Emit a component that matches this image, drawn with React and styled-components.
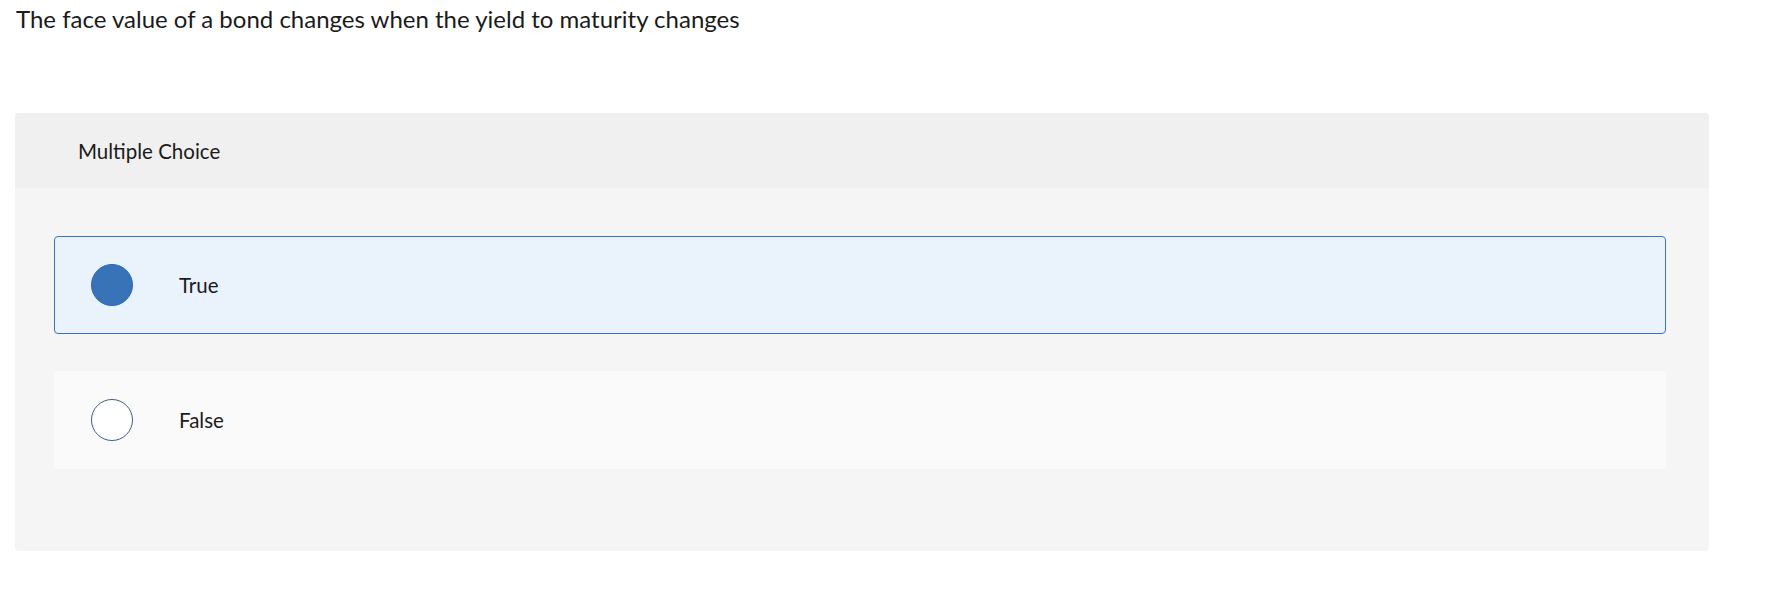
import styled, { createGlobalStyle } from "styled-components";

const GlobalStyle = createGlobalStyle`
  html, body {
    margin: 0;
    padding: 0;
    background: #ffffff;
  }
  body {
    font-family: Lato, "Noto Sans", "Liberation Sans", sans-serif;
    color: #1b1b1b;
  }
`;

const Page = styled.div`
  padding: 4px 68px 0 15px;
`;

const Question = styled.p`
  margin: 0 0 0 1px;
  font-size: 24px;
  line-height: 30px;
  color: #1b1b1b;
`;

const Panel = styled.section`
  margin-top: 79px;
  background: #f5f5f5;
  border-radius: 4px;
  overflow: hidden;
`;

const PanelHeader = styled.header`
  height: 75px;
  background: #f0f0f0;
  display: flex;
  align-items: center;
  padding-left: 63px;
  font-size: 20.5px;
`;

const Options = styled.div`
  display: flex;
  flex-direction: column;
  gap: 37px;
  padding: 48px 43px 82px 39px;
`;

const Option = styled.label`
  height: 98px;
  box-sizing: border-box;
  display: flex;
  align-items: center;
  gap: 46px;
  padding-left: ${(p) => (p.$selected ? 36 : 37)}px;
  border-radius: 4px;
  background: ${(p) => (p.$selected ? "#eaf2fb" : "#fafafa")};
  border: ${(p) => (p.$selected ? "1px solid #3a76be" : "none")};
  cursor: pointer;
`;

const Radio = styled.span`
  width: 42px;
  height: 42px;
  box-sizing: border-box;
  border-radius: 50%;
  flex: none;
  background: ${(p) => (p.$checked ? "#3973b7" : "#ffffff")};
  border: ${(p) => (p.$checked ? "1.5px solid #2468bf" : "1.5px solid #3f5f86")};
`;

const OptionText = styled.span`
  font-size: 20.5px;
  color: #1b1b1b;
`;

const choices = [
  { label: "True", selected: true },
  { label: "False", selected: false },
];

export default function App() {
  return (
    <>
      <GlobalStyle />
      <Page>
        <Question>The face value of a bond changes when the yield to maturity changes</Question>
        <Panel>
          <PanelHeader>Multiple Choice</PanelHeader>
          <Options>
            {choices.map((c) => (
              <Option key={c.label} $selected={c.selected}>
                <Radio $checked={c.selected} />
                <OptionText>{c.label}</OptionText>
              </Option>
            ))}
          </Options>
        </Panel>
      </Page>
    </>
  );
}
